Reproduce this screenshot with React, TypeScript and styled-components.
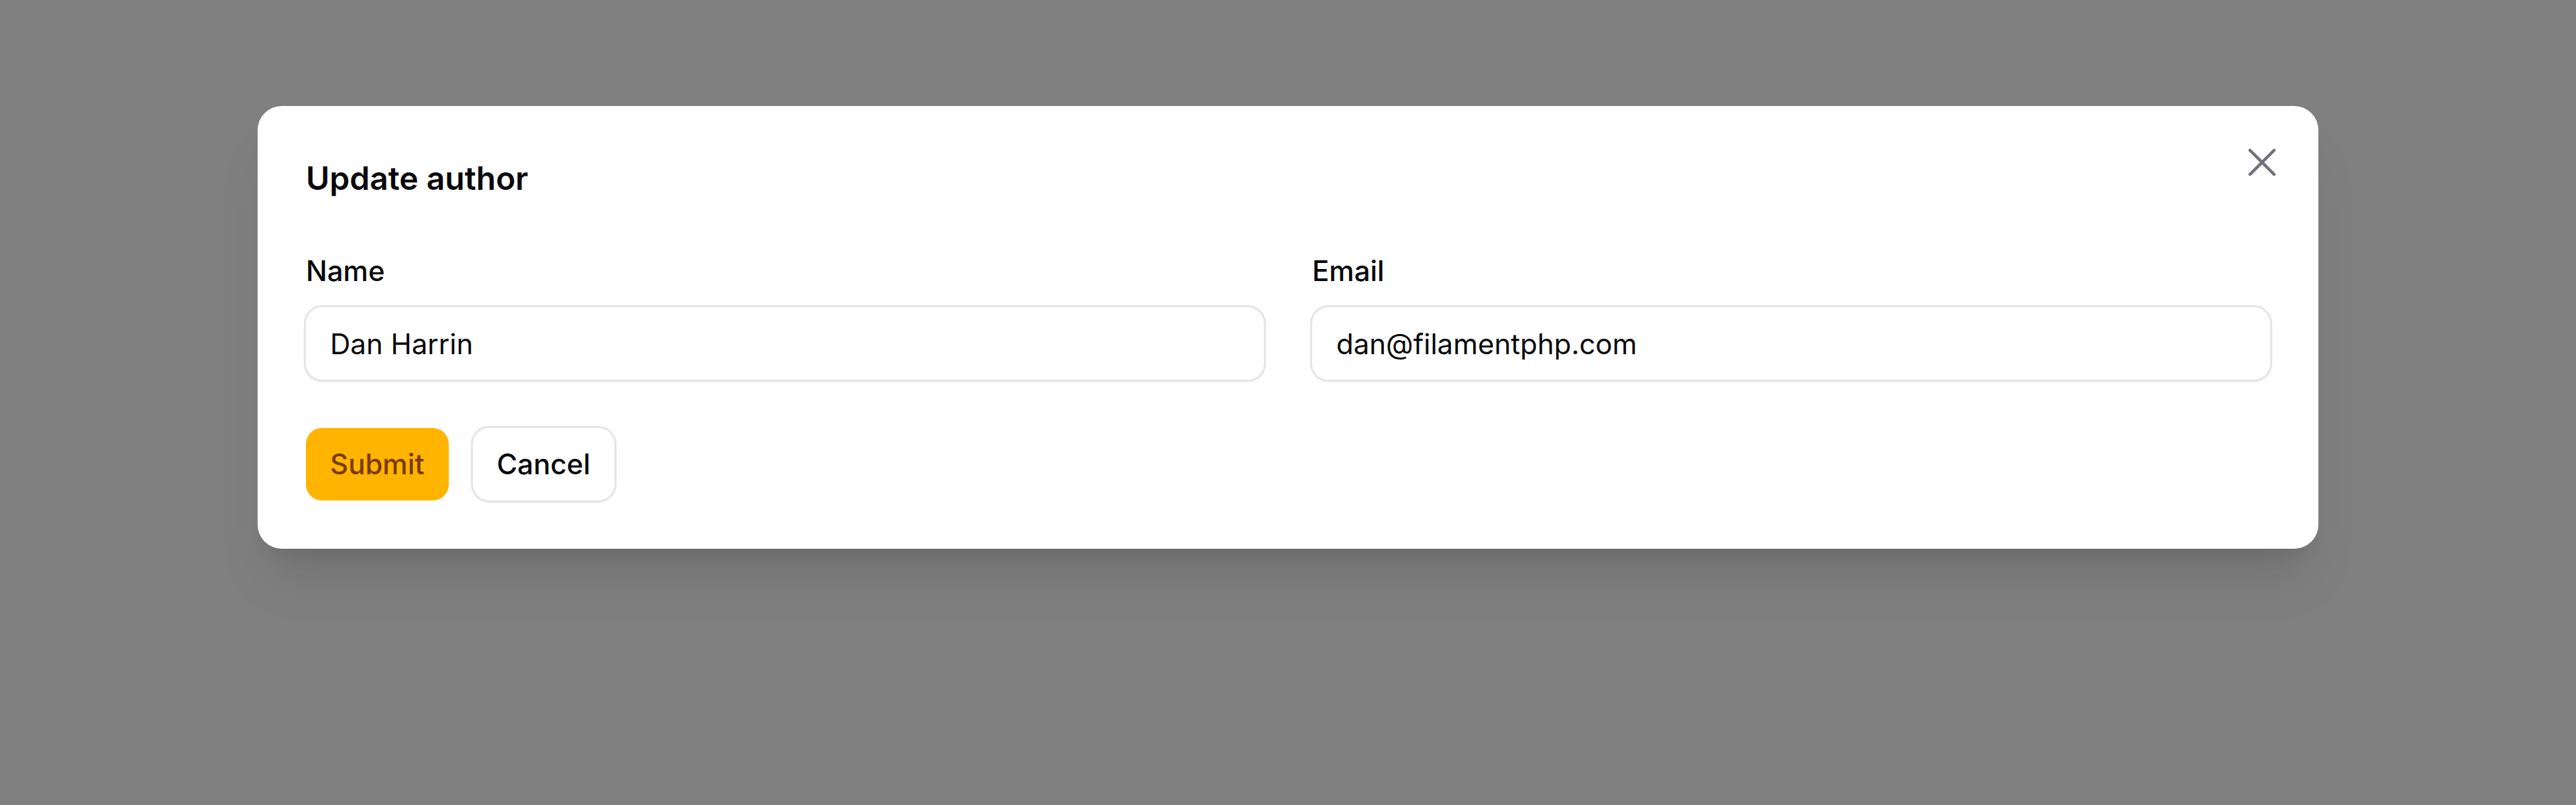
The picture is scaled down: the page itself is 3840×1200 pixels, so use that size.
import React from 'react'
import styled, { createGlobalStyle } from 'styled-components'

const GlobalStyle = createGlobalStyle`
  * { box-sizing: border-box; }
  html, body {
    margin: 0;
    padding: 0;
    background: #808080;
    font-family: Inter, "Noto Sans", sans-serif;
    color: #09090b;
  }
`

const Backdrop = styled.div`
  display: flex;
  justify-content: center;
  align-items: flex-start;
  min-height: 1200px;
  padding-top: 158px;
  background: #808080;
`

const Modal = styled.div`
  display: flex;
  flex-direction: column;
  gap: 72px;
  width: 3072px;
  padding: 72px;
  background: #ffffff;
  border-radius: 36px;
  box-shadow: 0 60px 75px -15px rgba(0, 0, 0, 0.1),
    0 24px 30px -18px rgba(0, 0, 0, 0.1);
`

const Header = styled.div`
  display: flex;
  justify-content: space-between;
  align-items: flex-start;
`

const Title = styled.h2`
  margin: 0;
  font-size: 48px;
  line-height: 72px;
  font-weight: 600;
  color: #09090b;
`

const CloseButton = styled.button`
  display: flex;
  align-items: center;
  justify-content: center;
  width: 72px;
  height: 72px;
  margin: -24px -24px 0 0;
  padding: 0;
  border: none;
  background: transparent;
  color: #71717a;
  cursor: pointer;
`

const Grid = styled.div`
  display: grid;
  grid-template-columns: 1fr 1fr;
  gap: 72px;
`

const Field = styled.div`
  display: flex;
  flex-direction: column;
  gap: 24px;
`

const Label = styled.label`
  font-size: 42px;
  line-height: 60px;
  font-weight: 500;
  color: #09090b;
`

const Input = styled.input`
  width: 100%;
  height: 108px;
  padding: 18px 36px;
  border: none;
  outline: none;
  border-radius: 24px;
  background: #ffffff;
  font: inherit;
  font-size: 42px;
  line-height: 72px;
  font-weight: 400;
  color: #09090b;
  box-shadow: 0 0 0 3px #e4e4e7, 0 3px 6px 0 rgba(0, 0, 0, 0.07);
`

const Actions = styled.div`
  display: flex;
  gap: 36px;
`

const Button = styled.button<{ $primary?: boolean }>`
  display: inline-flex;
  align-items: center;
  justify-content: center;
  height: 108px;
  padding: 24px 36px;
  border: none;
  border-radius: 24px;
  font: inherit;
  font-size: 42px;
  line-height: 60px;
  font-weight: 500;
  cursor: pointer;
  background: ${p => (p.$primary ? '#ffb400' : '#ffffff')};
  color: ${p => (p.$primary ? '#7a3a0a' : '#09090b')};
  box-shadow: ${p =>
    p.$primary ? 'none' : '0 0 0 3px #e4e4e7, 0 3px 6px 0 rgba(0, 0, 0, 0.05)'};
`

const XIcon = () => (
  <svg width="72" height="72" viewBox="0 0 24 24" fill="none" stroke="currentColor" strokeWidth={1.5} strokeLinecap="round" strokeLinejoin="round">
    <path d="M6 18 18 6M6 6l12 12" />
  </svg>
)

const App = () => {
  return (
    <>
      <GlobalStyle />
      <Backdrop>
        <Modal>
          <Header>
            <Title>Update author</Title>
            <CloseButton aria-label="Close">
              <XIcon />
            </CloseButton>
          </Header>
          <Grid>
            <Field>
              <Label htmlFor="name">Name</Label>
              <Input id="name" defaultValue="Dan Harrin" />
            </Field>
            <Field>
              <Label htmlFor="email">Email</Label>
              <Input id="email" type="email" defaultValue="dan@filamentphp.com" />
            </Field>
          </Grid>
          <Actions>
            <Button $primary>Submit</Button>
            <Button>Cancel</Button>
          </Actions>
        </Modal>
      </Backdrop>
    </>
  )
}

export default App
